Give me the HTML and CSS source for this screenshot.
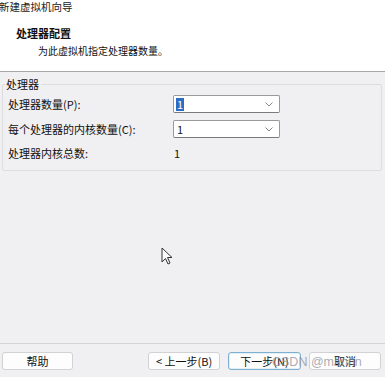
FILE: index.html
```html
<!DOCTYPE html>
<html lang="zh">
<head>
<meta charset="utf-8">
<link rel="stylesheet" href="styles.css">
</head>
<body>
<div class="window">
  <header class="header">
    <div class="title">新建虚拟机向导</div>
    <div class="heading">处理器配置</div>
    <div class="sub">为此虚拟机指定处理器数量。</div>
  </header>
  <main class="main">
    <fieldset class="group">
      <legend class="legend">处理器</legend>
      <div class="row">
        <span class="label">处理器数量(P):</span>
        <div class="combo"><span class="sel">1</span><svg class="chev" width="8" height="5" viewBox="0 0 8 5"><path d="M0.5 0.5 L4 4 L7.5 0.5" fill="none" stroke="#8a8a8a" stroke-width="1"/></svg></div>
      </div>
      <div class="row">
        <span class="label">每个处理器的内核数量(C):</span>
        <div class="combo"><span class="val">1</span><svg class="chev" width="8" height="5" viewBox="0 0 8 5"><path d="M0.5 0.5 L4 4 L7.5 0.5" fill="none" stroke="#8a8a8a" stroke-width="1"/></svg></div>
      </div>
      <div class="row row-text">
        <span class="label">处理器内核总数:</span>
        <span class="total">1</span>
      </div>
    </fieldset>
  </main>
  <footer class="footer">
    <button class="btn btn-help">帮助</button>
    <div class="nav">
      <button class="btn">&lt; 上一步(B)</button>
      <button class="btn btn-default">下一步(N)</button>
      <button class="btn">取消</button>
    </div>
  </footer>
  <div class="watermark">CSDN @mannn</div>
  <svg class="cursor" width="13" height="19" viewBox="0 0 13 19"><path d="M1 1 L1 15 L4.5 11.5 L7 17 L9 16 L6.5 10.5 L11 10.5 Z" fill="#fafafa" stroke="#333" stroke-width="1" stroke-linejoin="round"/></svg>
</div>
</body>
</html>
```
FILE: styles.css
```css
* { box-sizing: border-box; }
html, body { margin: 0; padding: 0; }
body {
  width: 385px;
  height: 377px;
  overflow: hidden;
  font-family: "Noto Sans CJK SC", "Noto Sans", sans-serif;
  color: #111;
  background: #f0eff2;
}
.window {
  position: relative;
  width: 385px;
  height: 377px;
  display: flex;
  flex-direction: column;
}
.header {
  height: 72px;
  background: #fff;
  border-bottom: 1px solid #a8a8a8;
}
.title {
  font-size: 10.5px;
  line-height: 14px;
  margin-left: -1px;
  color: #222;
}
.heading {
  font-size: 11px;
  font-weight: bold;
  line-height: 14px;
  margin-top: 12px;
  margin-left: 16px;
}
.sub {
  font-size: 10px;
  line-height: 14px;
  margin-top: 4px;
  margin-left: 38px;
}
.main {
  flex: 1;
  padding: 5px 3px 0 2px;
  border-bottom: 1px solid #d4d3d6;
}
.group {
  margin: 0;
  padding: 4px 5px 10px 5px;
  border: 1px solid #dddcdf;
  border-radius: 2px;
  min-width: 0;
}
.legend {
  font-size: 11px;
  line-height: 14px;
  padding: 0 2px 0 1px;
  margin-left: -3px;
}
.row {
  display: flex;
  align-items: center;
  height: 18px;
  font-size: 11px;
}
.row + .row { margin-top: 7px; }
.row-text { height: 14px; margin-top: 8px !important; }
.label { width: 165px; }
.combo {
  width: 107px;
  height: 18px;
  background: #fff;
  border: 1px solid #9a9a9a;
  border-bottom-color: #7a7a7a;
  border-radius: 2px;
  display: flex;
  align-items: center;
  padding-left: 2px;
  position: relative;
}
.sel {
  background: #2b6cc4;
  color: #fff;
  line-height: 13px;
  padding: 0 1px;
}
.val { padding-left: 1px; }
.chev { position: absolute; right: 6px; top: 6px; }
.total { padding-left: 1px; }
.footer {
  height: 33px;
  display: flex;
  justify-content: space-between;
  padding: 8px 4px 0 2px;
}
.nav { display: flex; gap: 8px; }
.btn {
  width: 72px;
  height: 18px;
  margin: 0;
  padding: 0;
  background: #fdfdfd;
  border: 1px solid #d2d1d4;
  border-radius: 3px;
  font-family: "Noto Sans CJK SC", "Noto Sans", sans-serif;
  font-size: 11px;
  color: #111;
  line-height: 16px;
}
.btn-help { width: 71px; }
.btn-default { border-color: #7fb0cf; box-shadow: inset 0 0 0 1px #e3eff6; width: 73px; }
.watermark {
  position: absolute;
  left: 272px;
  top: 355px;
  font-family: "Liberation Sans", sans-serif;
  font-size: 12.5px;
  line-height: 14px;
  color: rgba(150, 150, 155, 0.8);
  pointer-events: none;
}
.cursor { position: absolute; left: 161px; top: 247px; }
```
